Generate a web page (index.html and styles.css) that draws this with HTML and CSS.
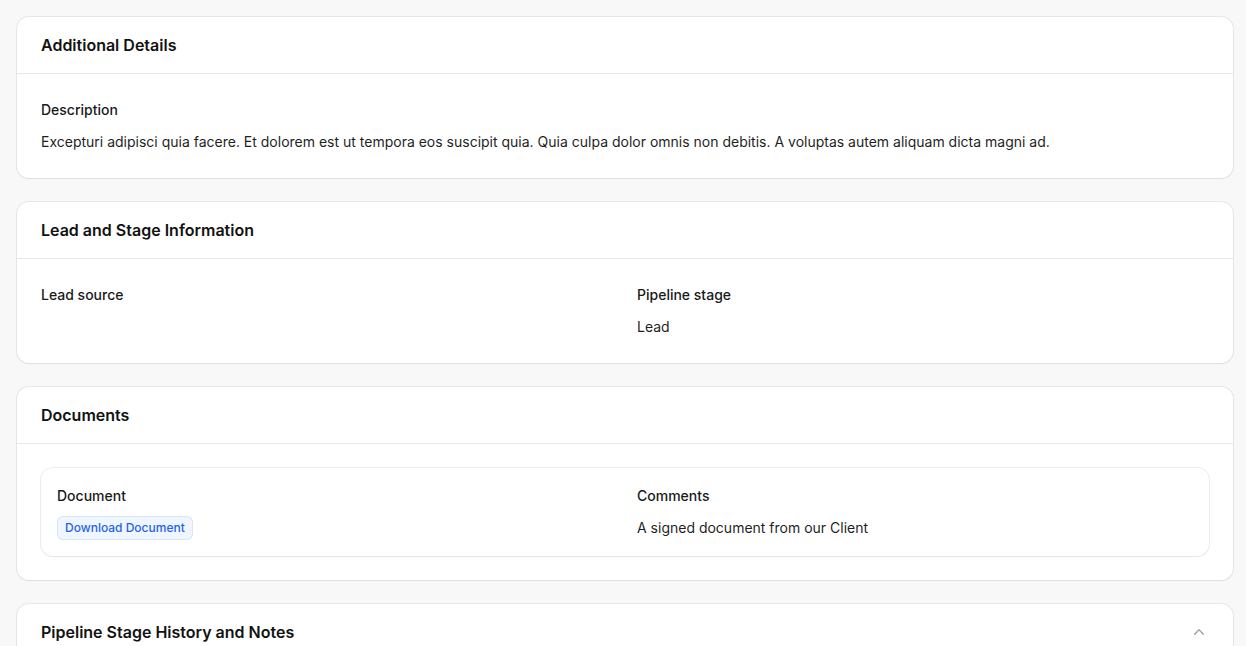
FILE: index.html
```html
<!DOCTYPE html>
<html lang="en">
<head>
<meta charset="utf-8">
<title>Details</title>
<link rel="stylesheet" href="styles.css">
</head>
<body>
<main class="page">
  <section class="card">
    <header class="card-header"><h2 class="card-title">Additional Details</h2></header>
    <div class="card-body">
      <div class="entry">
        <div class="entry-label">Description</div>
        <div class="entry-value">Excepturi adipisci quia facere. Et dolorem est ut tempora eos suscipit quia. Quia culpa dolor omnis non debitis. A voluptas autem aliquam dicta magni ad.</div>
      </div>
    </div>
  </section>

  <section class="card">
    <header class="card-header"><h2 class="card-title">Lead and Stage Information</h2></header>
    <div class="card-body grid2">
      <div class="entry">
        <div class="entry-label">Lead source</div>
      </div>
      <div class="entry">
        <div class="entry-label">Pipeline stage</div>
        <div class="entry-value">Lead</div>
      </div>
    </div>
  </section>

  <section class="card">
    <header class="card-header"><h2 class="card-title">Documents</h2></header>
    <div class="card-body">
      <div class="item grid2">
        <div class="entry">
          <div class="entry-label">Document</div>
          <div class="entry-badge"><span class="badge">Download Document</span></div>
        </div>
        <div class="entry">
          <div class="entry-label">Comments</div>
          <div class="entry-value">A signed document from our Client</div>
        </div>
      </div>
    </div>
  </section>

  <section class="card">
    <header class="card-header row">
      <h2 class="card-title">Pipeline Stage History and Notes</h2>
      <svg class="chev" width="20" height="20" viewBox="0 0 20 20" fill="currentColor"><path fill-rule="evenodd" d="M14.77 12.79a.75.75 0 01-1.06-.02L10 8.832 6.29 12.77a.75.75 0 11-1.08-1.04l4.25-4.5a.75.75 0 011.08 0l4.25 4.5a.75.75 0 01-.02 1.06z" clip-rule="evenodd"/></svg>
    </header>
    <div class="card-body spacer"></div>
  </section>
</main>
</body>
</html>
```

FILE: styles.css
```css
* { box-sizing: border-box; }
html, body { margin: 0; padding: 0; }
body {
  background: #f8f8f8;
  font-family: Inter, "Noto Sans", sans-serif;
  color: #141414;
  -webkit-font-smoothing: antialiased;
}
.page {
  padding: 17px 13px 16px 17px;
  display: flex;
  flex-direction: column;
  gap: 24px;
}
.card {
  background: #ffffff;
  border-radius: 12px;
  box-shadow: 0 0 0 1px rgba(10,10,10,0.07), 0 1px 2px rgba(0,0,0,0.04);
}
.card-header {
  padding: 16px 24px;
  border-bottom: 1px solid #e8e8e8;
}
.card-header.row {
  display: flex;
  align-items: center;
  justify-content: space-between;
}
.chev { color: #a3a3a3; display: block; }
.card-title {
  margin: 0;
  font-size: 16px;
  line-height: 24px;
  font-weight: 600;
  color: #121212;
}
.card-body {
  padding: 24px;
}
.spacer { height: 80px; }
.grid2 {
  display: grid;
  grid-template-columns: 1fr 1fr;
  column-gap: 24px;
}
.entry {
  display: flex;
  flex-direction: column;
  gap: 8px;
}
.entry-label {
  font-size: 14px;
  line-height: 24px;
  font-weight: 500;
  color: #1a1a1a;
}
.entry-value {
  font-size: 14px;
  line-height: 24px;
  color: #1f1f1f;
}
.item {
  border-radius: 12px;
  padding: 16px;
  background: #ffffff;
  box-shadow: 0 0 0 1px rgba(10,10,10,0.07), 0 1px 2px rgba(0,0,0,0.04);
}
.entry-badge { display: flex; }
.badge {
  display: inline-block;
  font-size: 12px;
  line-height: 16px;
  font-weight: 500;
  color: #2563eb;
  background: #eff6ff;
  box-shadow: inset 0 0 0 1px rgba(37,99,235,0.12);
  border-radius: 6px;
  padding: 4px 8px;
}
```
